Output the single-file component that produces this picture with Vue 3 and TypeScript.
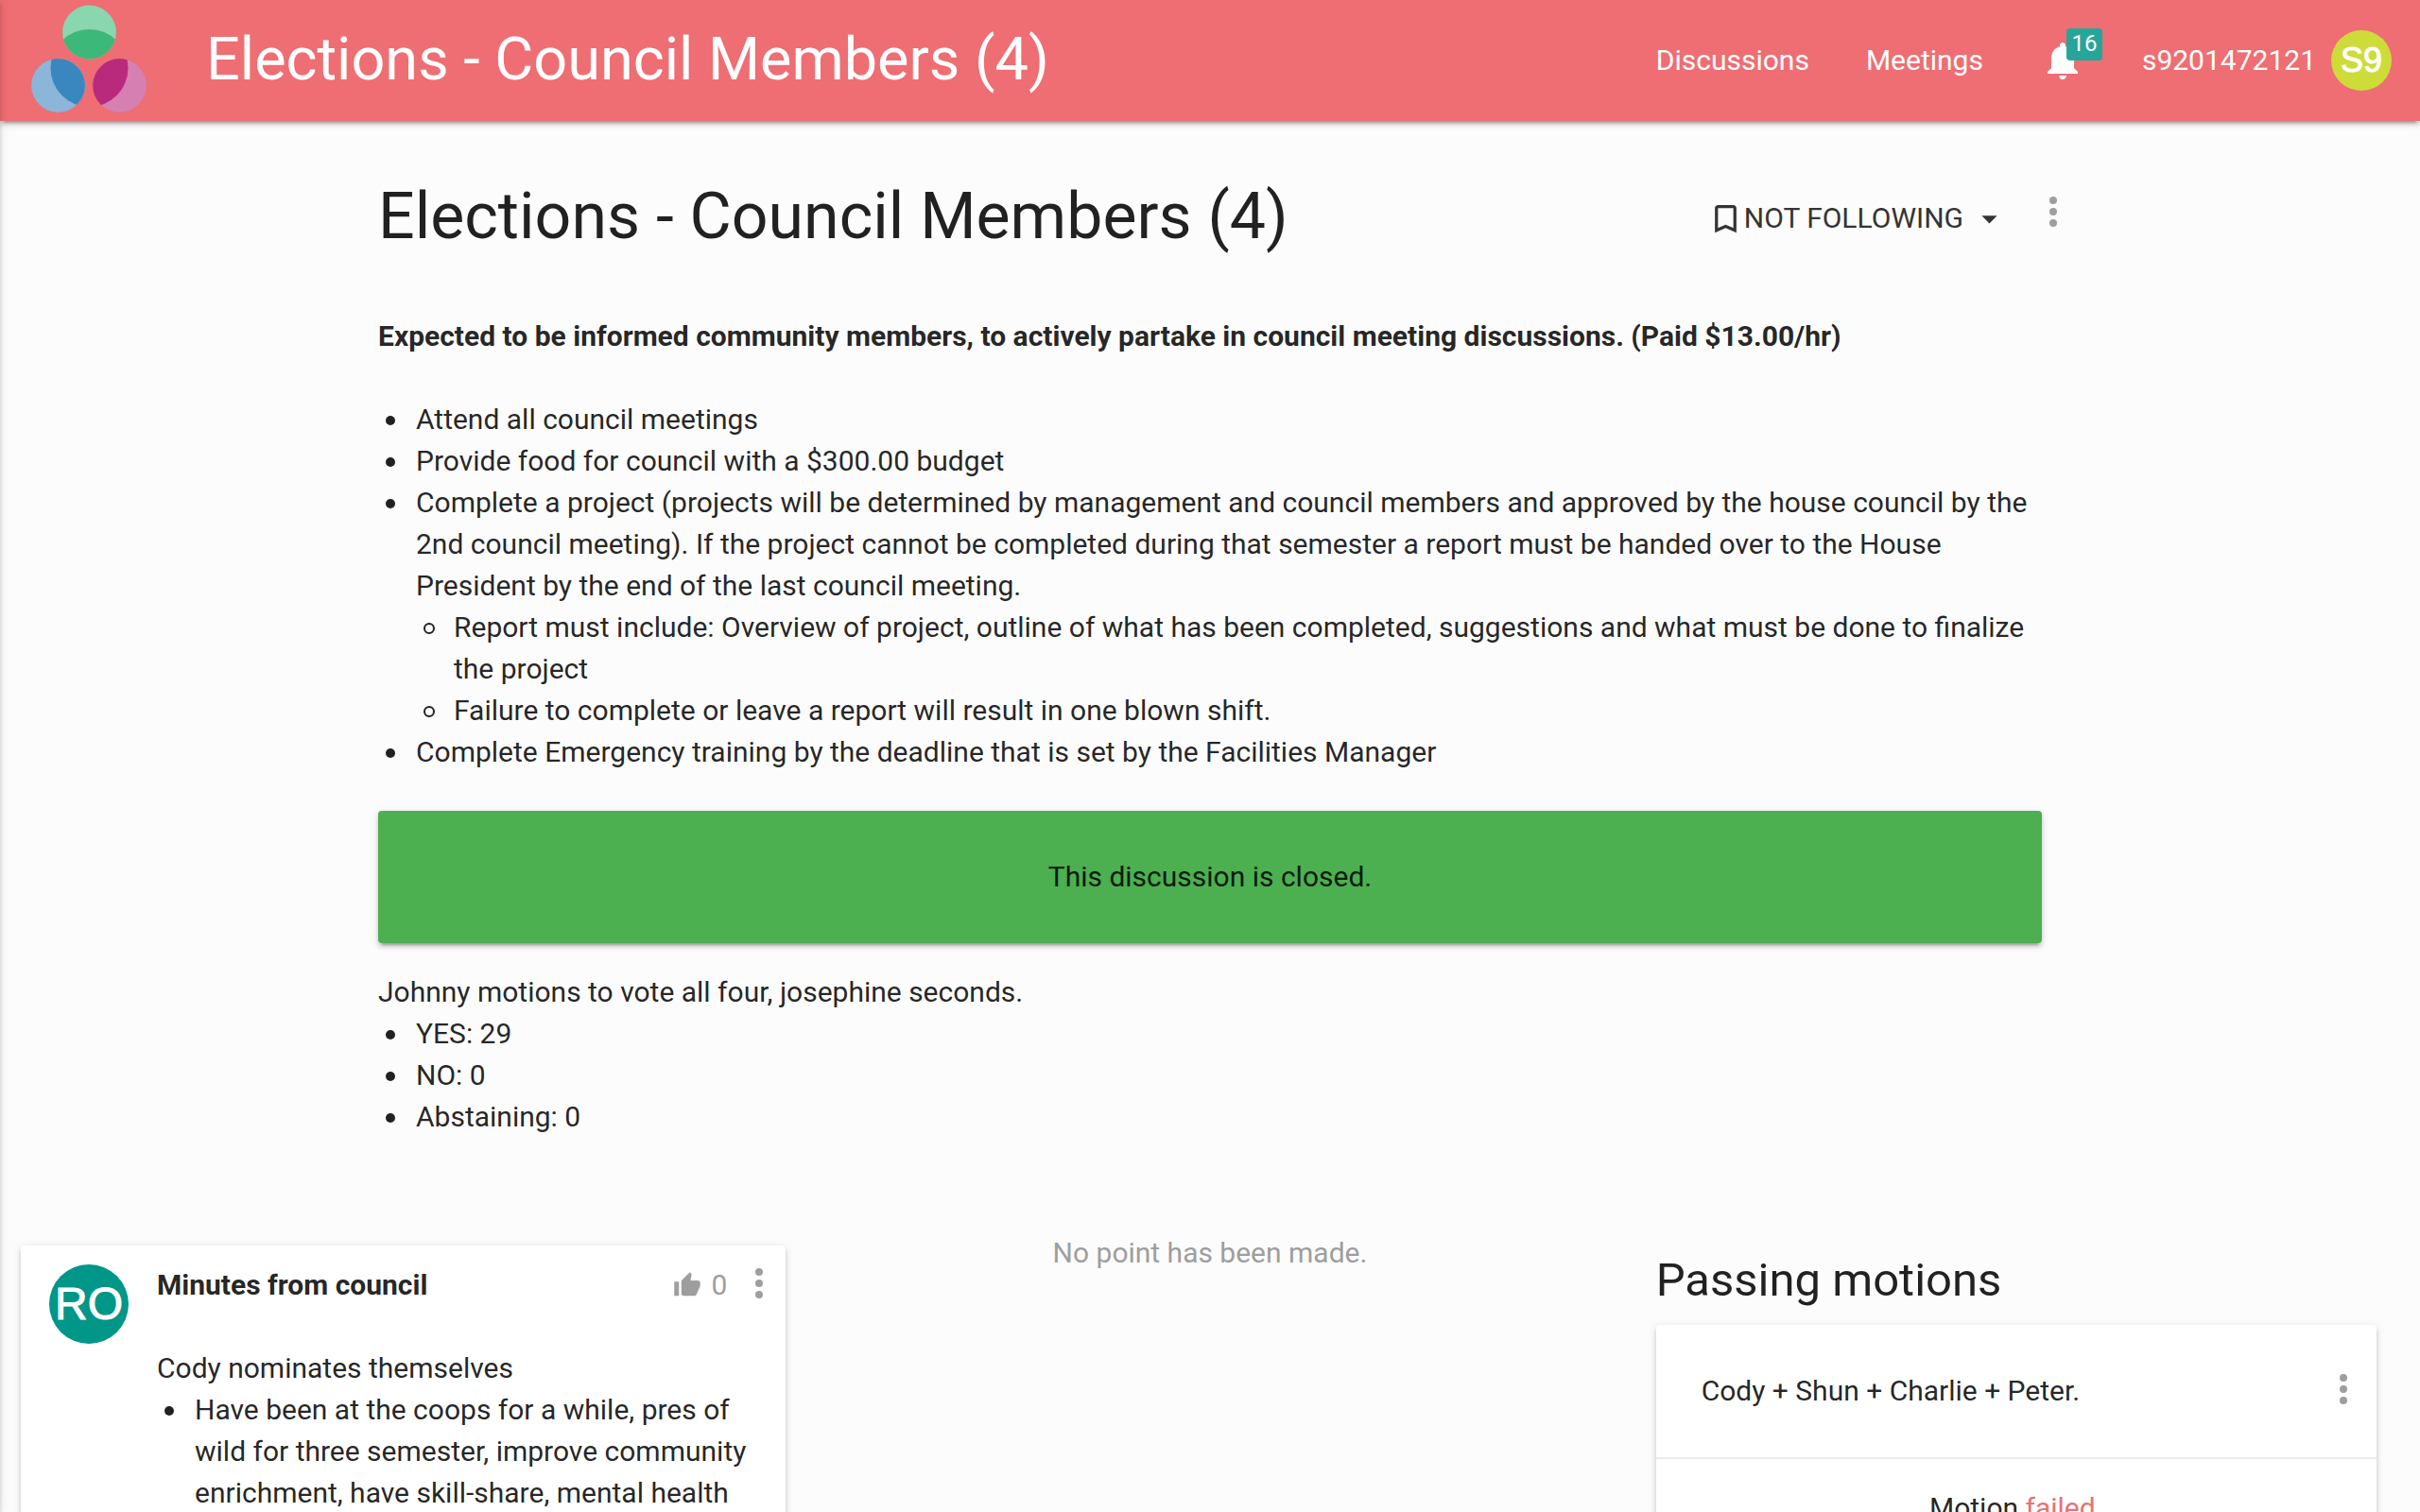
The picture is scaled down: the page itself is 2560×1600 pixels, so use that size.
<script setup lang="ts">
interface DutyItem {
  text: string
  children?: string[]
}

const title = 'Elections - Council Members (4)'
const username = 's9201472121'
const unread = 16

const duties: DutyItem[] = [
  { text: 'Attend all council meetings' },
  { text: 'Provide food for council with a $300.00 budget' },
  {
    text: 'Complete a project (projects will be determined by management and council members and approved by the house council by the 2nd council meeting). If the project cannot be completed during that semester a report must be handed over to the House President by the end of the last council meeting.',
    children: [
      'Report must include: Overview of project, outline of what has been completed, suggestions and what must be done to finalize the project',
      'Failure to complete or leave a report will result in one blown shift.',
    ],
  },
  { text: 'Complete Emergency training by the deadline that is set by the Facilities Manager' },
]

const votes: string[] = ['YES: 29', 'NO: 0', 'Abstaining: 0']
</script>

<template>
  <div class="page">
    <header class="navbar">
      <a class="logo" href="#" aria-label="Home">
        <svg width="130" height="128" viewBox="30 0 130 128" aria-hidden="true">
          <defs>
            <clipPath id="centre"><circle cx="94.5" cy="72" r="41" /></clipPath>
          </defs>
          <circle cx="94.5" cy="34" r="28.4" fill="#8ad6ae" />
          <circle cx="61.5" cy="90.5" r="28.4" fill="#8bb6d9" />
          <circle cx="126.5" cy="90.5" r="28.4" fill="#d680b2" />
          <g clip-path="url(#centre)">
            <circle cx="94.5" cy="34" r="28.4" fill="#3cb878" />
            <circle cx="61.5" cy="90.5" r="28.4" fill="#3a87c0" />
            <circle cx="126.5" cy="90.5" r="28.4" fill="#b92a7c" />
          </g>
        </svg>
      </a>
      <a class="brand" href="#">{{ title }}</a>
      <nav class="links">
        <a href="#">Discussions</a>
        <a href="#">Meetings</a>
        <a class="bell" href="#" aria-label="Notifications">
          <svg width="48" height="48" viewBox="0 0 24 24" fill="currentColor" aria-hidden="true">
            <path d="M12 22c1.1 0 2-.9 2-2h-4c0 1.1.89 2 2 2zm6-6v-5c0-3.07-1.64-5.64-4.5-6.32V4c0-.83-.67-1.5-1.5-1.5s-1.5.67-1.5 1.5v.68C7.63 5.36 6 7.92 6 11v5l-2 2v1h16v-1l-2-2z" />
          </svg>
          <span class="badge">{{ unread }}</span>
        </a>
        <a class="user" href="#">
          {{ username }}
          <span class="avatar small">S9</span>
        </a>
      </nav>
    </header>

    <main>
      <article class="discussion">
        <div class="title-row">
          <h1>{{ title }}</h1>
          <div class="actions">
            <button class="follow" type="button">
              <svg class="glyph" viewBox="0 0 24 24" fill="currentColor" aria-hidden="true">
                <path d="M17 3H7c-1.1 0-1.99.9-1.99 2L5 21l7-3 7 3V5c0-1.100-.9-2-2-2zm0 15l-5-2.180L7 18V5h10v13z" />
              </svg>
              <span>NOT FOLLOWING</span>
              <svg class="glyph" viewBox="0 0 24 24" fill="currentColor" aria-hidden="true">
                <path d="M7 10l5 5 5-5z" />
              </svg>
            </button>
            <button class="more" type="button" aria-label="More options">
              <svg width="48" height="48" viewBox="0 0 24 24" fill="currentColor" aria-hidden="true">
                <path d="M12 8a2 2 0 1 0 0-4 2 2 0 0 0 0 4zm0 2a2 2 0 1 0 0 4 2 2 0 0 0 0-4zm0 6a2 2 0 1 0 0 4 2 2 0 0 0 0-4z" />
              </svg>
            </button>
          </div>
        </div>

        <p class="lead">
          <strong>Expected to be informed community members, to actively partake in council meeting discussions. (Paid $13.00/hr)</strong>
        </p>
        <ul class="duties">
          <li v-for="duty in duties" :key="duty.text">
            {{ duty.text }}
            <ul v-if="duty.children">
              <li v-for="child in duty.children" :key="child">{{ child }}</li>
            </ul>
          </li>
        </ul>

        <div class="card closed">This discussion is closed.</div>

        <p>Johnny motions to vote all four, josephine seconds.</p>
        <ul>
          <li v-for="vote in votes" :key="vote">{{ vote }}</li>
        </ul>
      </article>

      <div class="columns">
        <section class="column">
          <article class="card point">
            <span class="avatar large">RO</span>
            <div class="point-body">
              <div class="point-head">
                <h3>Minutes from council</h3>
                <button class="like" type="button" aria-label="Like">
                  <svg width="30" height="30" viewBox="0 0 24 24" fill="currentColor" aria-hidden="true">
                    <path d="M1 21h4V9H1v12zm22-11c0-1.100-.9-2-2-2h-6.310l.950-4.570.030-.320c0-.410-.170-.790-.440-1.060L14.170 1 7.590 7.590C7.220 7.950 7 8.450 7 9v10c0 1.100.9 2 2 2h9c.830 0 1.540-.5 1.840-1.220l3.020-7.050c.090-.230.140-.470.140-.730v-2z" />
                  </svg>
                  <span>0</span>
                </button>
                <button class="more" type="button" aria-label="More options">
                  <svg width="48" height="48" viewBox="0 0 24 24" fill="currentColor" aria-hidden="true">
                    <path d="M12 8a2 2 0 1 0 0-4 2 2 0 0 0 0 4zm0 2a2 2 0 1 0 0 4 2 2 0 0 0 0-4zm0 6a2 2 0 1 0 0 4 2 2 0 0 0 0-4z" />
                  </svg>
                </button>
              </div>
              <div class="point-text">
                <p>Cody nominates themselves</p>
                <ul>
                  <li>Have been at the coops for a while, pres of wild for three semester, improve community enrichment, have skill-share, mental health</li>
                </ul>
              </div>
            </div>
          </article>
        </section>

        <section class="column empty">
          <p>No point has been made.</p>
        </section>

        <section class="column motions">
          <h2>Passing motions</h2>
          <article class="card">
            <div class="motion">
              <p>Cody + Shun + Charlie + Peter.</p>
              <button class="more" type="button" aria-label="More options">
                <svg width="48" height="48" viewBox="0 0 24 24" fill="currentColor" aria-hidden="true">
                  <path d="M12 8a2 2 0 1 0 0-4 2 2 0 0 0 0 4zm0 2a2 2 0 1 0 0 4 2 2 0 0 0 0-4zm0 6a2 2 0 1 0 0 4 2 2 0 0 0 0-4z" />
                </svg>
              </button>
            </div>
            <p class="result">Motion <span class="failed">failed</span>.</p>
          </article>
        </section>
      </div>
    </main>
    <aside class="drawer" aria-hidden="true"></aside>
  </div>
</template>

<style>
body {
  margin: 0;
  background: #fcfcfc;
}
</style>

<style scoped>
.page {
  position: relative;
  height: 100vh;
  overflow: hidden;
  background: #fcfcfc;
  color: rgba(0, 0, 0, 0.87);
  font-family: Roboto, "Liberation Sans", sans-serif;
  font-size: 30px;
  line-height: 44px;
}

.page * {
  box-sizing: border-box;
}

/* Closed side drawer: only its shadow shows along the left edge */
.drawer {
  position: absolute;
  top: 0;
  bottom: 0;
  right: 100%;
  width: 480px;
  box-shadow: 0 4px 4px 0 rgba(0, 0, 0, 0.14), 0 2px 10px 0 rgba(0, 0, 0, 0.12), 0 6px 2px -4px rgba(0, 0, 0, 0.2);
}

h1,
h2,
h3,
p,
ul {
  margin: 0;
}

h1,
h2 {
  font-weight: 400;
}

ul {
  padding-left: 40px;
  list-style: none;
}

/* Bullets hang in the list's left padding */
li::before {
  content: "";
  display: inline-block;
  box-sizing: border-box;
  width: 10px;
  height: 10px;
  margin: 0 22px 0 -32px;
  border-radius: 50%;
  background: currentColor;
  vertical-align: 4px;
}

li li::before {
  width: 12px;
  height: 12px;
  margin: 0 20px 0 -32px;
  border: 2px solid currentColor;
  background: none;
  vertical-align: 3px;
}

a {
  color: inherit;
  text-decoration: none;
}

svg {
  display: block;
  flex: none;
}

button {
  display: flex;
  align-items: center;
  padding: 0;
  border: 0;
  background: none;
  color: #9e9e9e;
  font: inherit;
  cursor: pointer;
}

.navbar {
  position: relative;
  display: flex;
  align-items: center;
  height: 128px;
  padding: 0 30px;
  background: #ee6e73;
  color: #fff;
  box-shadow: 0 4px 4px 0 rgba(0, 0, 0, 0.14), 0 2px 10px 0 rgba(0, 0, 0, 0.12), 0 6px 2px -4px rgba(0, 0, 0, 0.2);
}

.brand {
  align-self: flex-start;
  margin-left: 58px;
  font-size: 63px;
  line-height: 126px;
  white-space: nowrap;
}

.links {
  display: flex;
  align-items: center;
  gap: 60px;
  margin-left: auto;
}

.bell {
  position: relative;
}

.badge {
  position: absolute;
  left: 28px;
  top: -10px;
  width: 38px;
  padding-bottom: 2px;
  border-radius: 4px;
  background: #26a69a;
  font-size: 24px;
  line-height: 32px;
  text-align: center;
}

.user {
  display: flex;
  align-items: center;
  gap: 16px;
}

.avatar {
  display: flex;
  flex: none;
  align-items: center;
  justify-content: center;
  border-radius: 50%;
  color: #fff;
  font-family: "Liberation Sans", Arial, sans-serif;
  -webkit-text-stroke: 1px #fff;
}

.small {
  width: 64px;
  height: 64px;
  background: #cddc39;
  font-size: 36px;
}

.large {
  width: 84px;
  height: 84px;
  background: #009688;
  font-size: 48px;
}

.discussion {
  width: 70%;
  margin: 0 auto;
  padding: 62px 16px 100px;
}

.title-row {
  display: flex;
  align-items: flex-start;
  justify-content: space-between;
  margin-right: -36px;
}

h1 {
  font-size: 68px;
  line-height: 78px;
}

.actions {
  display: flex;
  align-items: flex-start;
  gap: 24px;
  padding-top: 10px;
}

.follow {
  color: #343434;
  line-height: 62px;
}

.follow span {
  padding-right: 8px;
}

.glyph {
  width: 39px;
  height: 39px;
}

.lead {
  margin: 66px 0 44px;
}

strong,
h3 {
  font-size: 30px;
  font-weight: 700;
}

.card {
  border-radius: 4px;
  background: #fff;
  box-shadow: 0 4px 4px 0 rgba(0, 0, 0, 0.14), 0 2px 10px 0 rgba(0, 0, 0, 0.12), 0 6px 2px -4px rgba(0, 0, 0, 0.2);
}

.closed {
  margin: 40px 0 30px;
  padding: 48px;
  background: #4caf50;
  text-align: center;
}

.columns {
  display: grid;
  grid-template-columns: repeat(3, 1fr);
  align-items: start;
}

.column {
  padding: 0 22px;
}

.point {
  display: flex;
  align-items: flex-start;
  gap: 30px;
  margin-top: 14px;
  padding: 20px 4px 30px 30px;
}

.point-body {
  flex: 1;
}

.point-head {
  display: flex;
  align-items: center;
  height: 44px;
}

.card .more {
  padding-bottom: 4px;
}

.like {
  gap: 10px;
  margin: 0 10px 0 auto;
}

.point-text {
  padding: 44px 26px 0 0;
}

.empty {
  color: #9e9e9e;
  text-align: center;
}

.motions {
  padding: 24px 46px 0 45px;
}

h2 {
  margin-bottom: 20px;
  font-size: 49px;
  line-height: 54px;
}

.motion {
  display: flex;
  align-items: center;
  justify-content: space-between;
  padding: 44px 11px 44px 48px;
  border-bottom: 2px solid #ebebeb;
}

.result {
  padding: 30px;
  text-align: center;
}

.failed {
  color: #e57373;
}
</style>
